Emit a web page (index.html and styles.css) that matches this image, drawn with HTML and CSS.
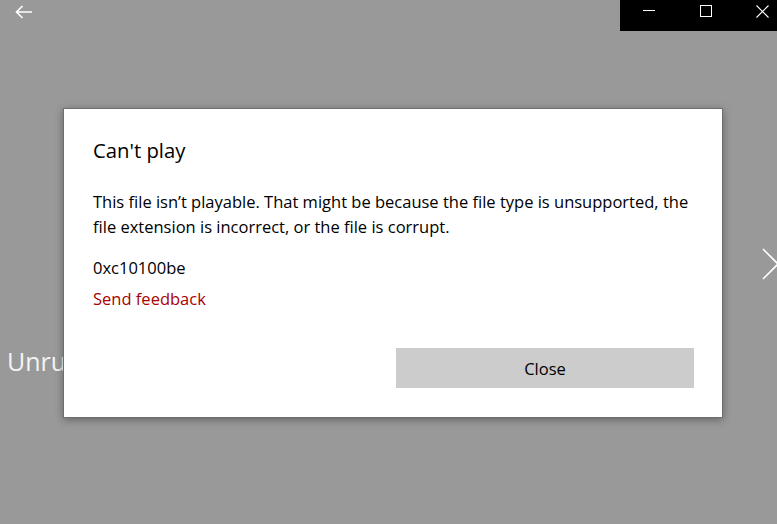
FILE: index.html
```html
<!DOCTYPE html>
<html lang="en">
<head>
    <meta charset="UTF-8">
    <meta name="viewport" content="width=device-width, initial-scale=1.0">
    <title>Movies &amp; TV</title>
    <link rel="stylesheet" href="styles.css">
</head>
<body>
    <div class="app">
        <div class="titlebar">
            <button class="back-btn" aria-label="Back">
                <svg width="18" height="14" viewBox="0 0 18 14">
                    <path d="M17 7H1.5M7.5 1L1.5 7l6 6" fill="none" stroke="#fff" stroke-width="1.6"/>
                </svg>
            </button>
            <div class="caption">
                <button class="cap-btn" aria-label="Minimize">
                    <svg width="12" height="12" viewBox="0 0 12 12"><path d="M0 5.5h12" stroke="#fff" stroke-width="1"/></svg>
                </button>
                <button class="cap-btn" aria-label="Maximize">
                    <svg width="12" height="12" viewBox="0 0 12 12"><rect x="0.5" y="0.5" width="11" height="11" fill="none" stroke="#fff" stroke-width="1"/></svg>
                </button>
                <button class="cap-btn" aria-label="Close">
                    <svg width="13" height="13" viewBox="0 0 13 13"><path d="M0.5 0.5l12 12M12.5 0.5l-12 12" stroke="#fff" stroke-width="1.1"/></svg>
                </button>
            </div>
        </div>

        <div class="stage">
            <div class="video-title">Unrushed</div>
            <svg class="next" width="18" height="32" viewBox="0 0 18 32">
                <path d="M1 1l15 15L1 31" fill="none" stroke="#fff" stroke-width="1.6"/>
            </svg>
        </div>

        <div class="overlay">
            <div class="dialog">
                <h2 class="dialog-title">Can't play</h2>
                <p class="dialog-text">This file isn’t playable. That might be because the file type is unsupported, the file extension is incorrect, or the file is corrupt.</p>
                <p class="error-code">0xc10100be</p>
                <a class="feedback" href="#">Send feedback</a>
                <div class="dialog-actions">
                    <button class="btn">Close</button>
                </div>
            </div>
        </div>
    </div>
</body>
</html>
```

FILE: styles.css
```css
* {
    margin: 0;
    padding: 0;
    box-sizing: border-box;
}

html, body {
    width: 100%;
    height: 100%;
    overflow: hidden;
}

body {
    font-family: 'Open Sans', 'Noto Sans', sans-serif;
    background: #999999;
    color: #000;
}

button {
    font-family: inherit;
    border: none;
    background: none;
    cursor: pointer;
}

.app {
    position: relative;
    width: 100%;
    height: 100%;
    display: flex;
    flex-direction: column;
}

.titlebar {
    height: 31px;
    display: flex;
    justify-content: space-between;
    align-items: flex-start;
}

.back-btn {
    width: 48px;
    height: 23px;
    display: flex;
    align-items: center;
    justify-content: center;
}

.caption {
    display: flex;
    background: #000;
    height: 31px;
    width: 157px;
    overflow: hidden;
}

.cap-btn {
    flex: 0 0 57px;
    height: 22px;
    display: flex;
    align-items: center;
    justify-content: center;
}

.stage {
    flex: 1;
    display: flex;
    justify-content: space-between;
    align-items: flex-start;
}

.video-title {
    margin-top: 313px;
    padding-left: 7px;
    font-size: 25px;
    color: #f4f4f4;
    white-space: nowrap;
}

.next {
    margin-top: 217px;
    margin-right: -3px;
}

.overlay {
    position: absolute;
    inset: 0;
    padding: 108px 0 0 63px;
}

.dialog {
    width: 660px;
    height: 310px;
    background: #fff;
    border: 1px solid #6e6e6e;
    box-shadow: 0 2px 8px rgba(0, 0, 0, 0.35);
    padding: 27px 29px 0 29px;
    display: flex;
    flex-direction: column;
}

.dialog-title {
    font-size: 20.3px;
    font-weight: normal;
    line-height: 28px;
    margin-bottom: 25px;
}

.dialog-text {
    font-size: 16.5px;
    line-height: 25px;
    margin-bottom: 19px;
}

.error-code {
    font-size: 16.5px;
    line-height: 20px;
    margin-bottom: 11px;
}

.feedback {
    font-size: 16.5px;
    line-height: 20px;
    color: #a80000;
    text-decoration: none;
    align-self: flex-start;
}

.dialog-actions {
    margin-top: 39px;
    display: flex;
    justify-content: flex-end;
}

.btn {
    width: 298px;
    height: 40px;
    background: #cccccc;
    font-size: 16.5px;
    color: #000;
    margin-right: -1px;
}
```
